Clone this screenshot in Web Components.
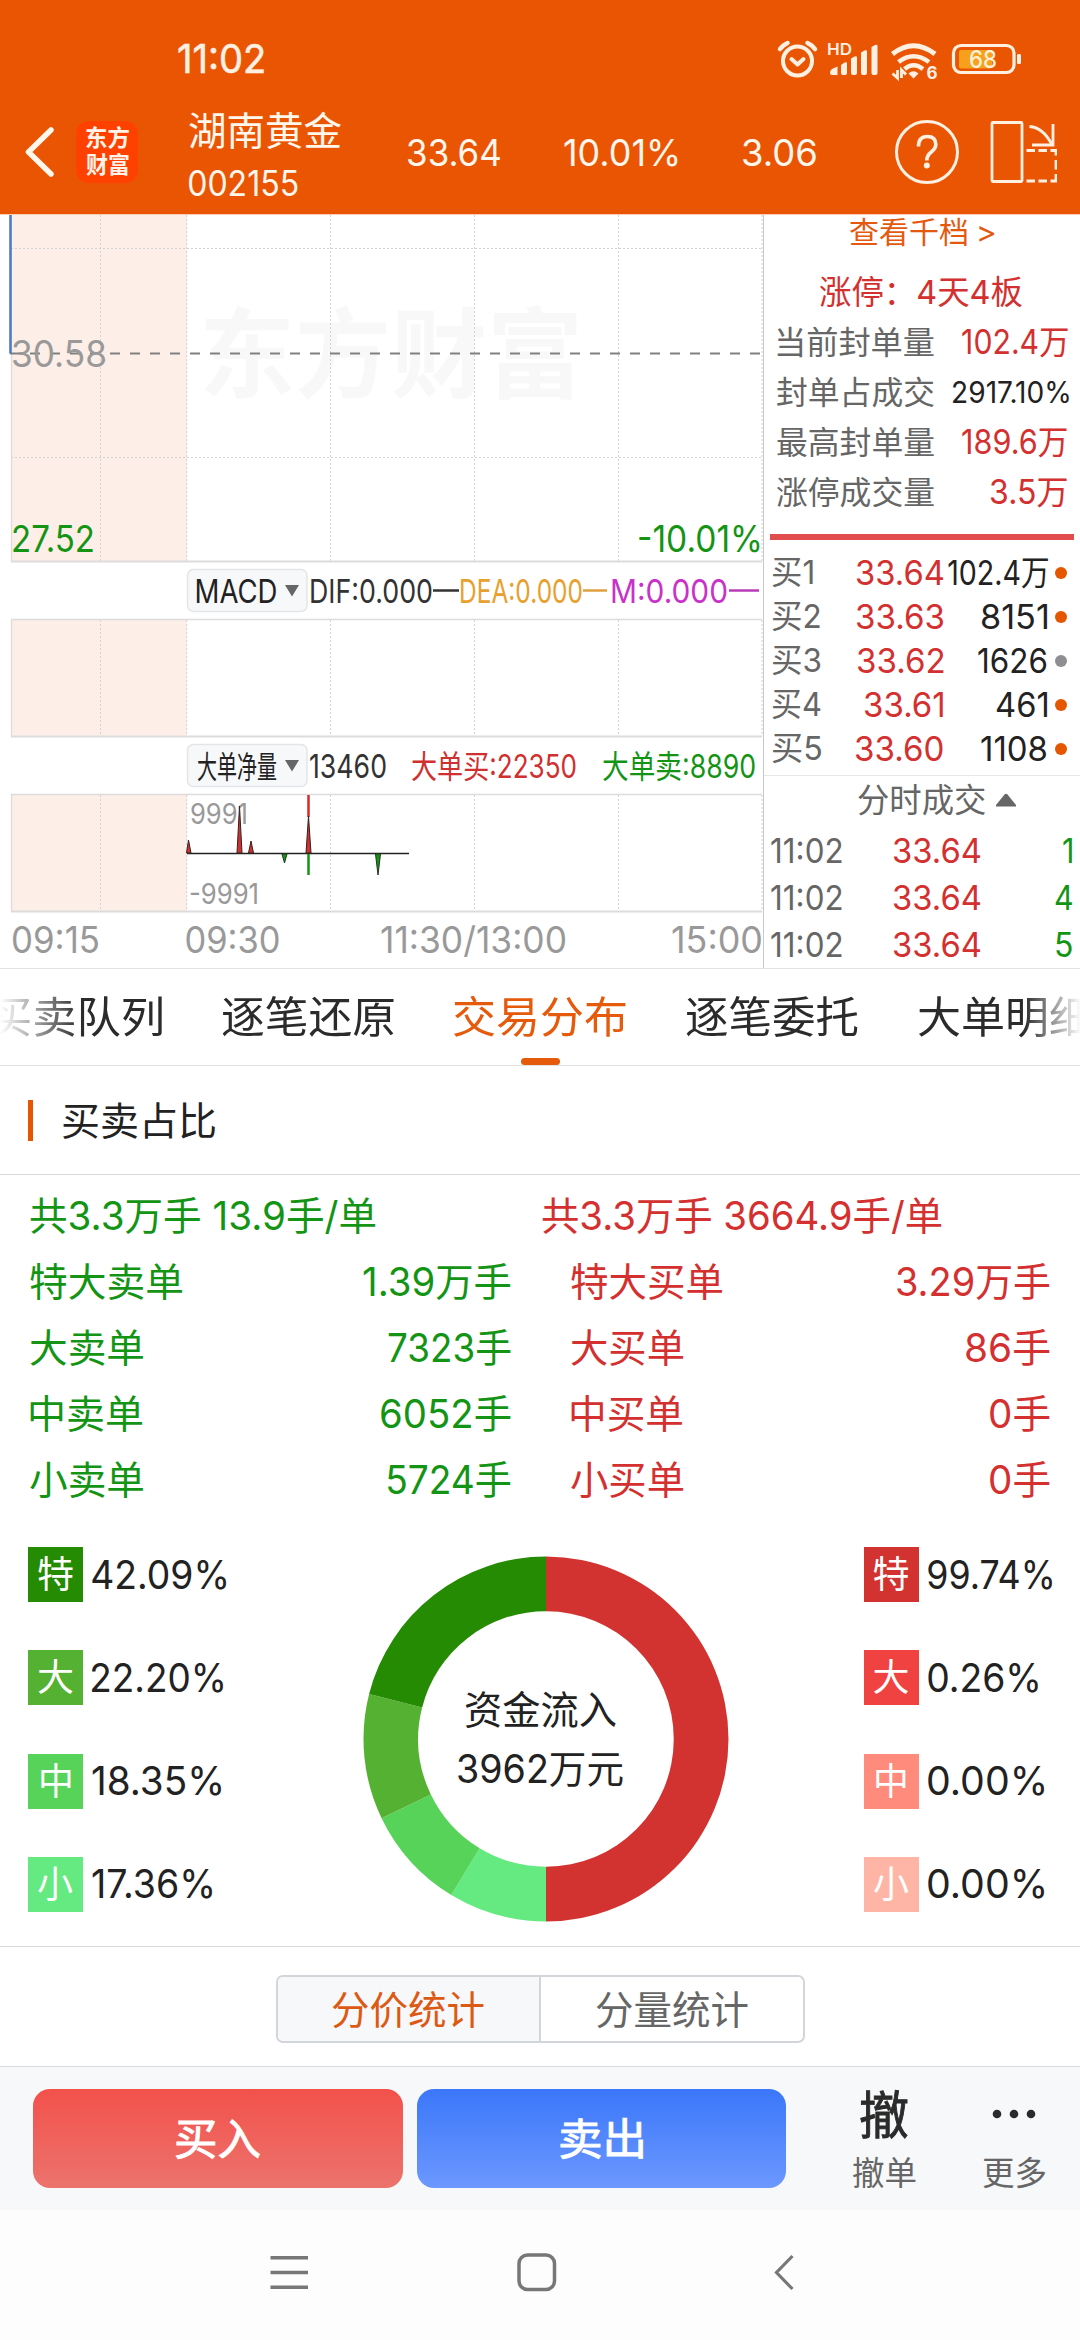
<!DOCTYPE html>
<html lang="zh-CN">
<head>
<meta charset="utf-8">
<meta name="viewport" content="width=1080">
<title>湖南黄金 002155</title>
<style>
html,body{margin:0;padding:0;background:#fff}
body{width:1080px;height:2340px;overflow:hidden;font-family:Inter,"Noto Sans CJK SC",sans-serif;color:#222}
</style>
</head>
<body>
<stock-app></stock-app>
<script>
const pen = document.createElement('canvas').getContext('2d');

/* One line of text whose ink fills exactly the width given in "w". */
class InkText extends HTMLElement {
  connectedCallback() {
    if (this.shadowRoot) return;
    const size = +this.getAttribute('size') || 32;
    const w = +this.getAttribute('w');
    const weight = this.getAttribute('weight') || 400;
    this.attachShadow({mode:'open'}).innerHTML = `<style>
      :host{display:block;flex:none;width:${w}px;height:${size}px;font-size:${size}px;line-height:${size}px;white-space:pre}
      span{display:block;width:max-content;font-weight:${weight};transform-origin:0 50%}
    </style><span><slot></slot></span>`;
    pen.font = `${weight} ${size}px Inter, "Noto Sans CJK SC", sans-serif`;
    const m = pen.measureText(this.textContent);
    const ink = m.actualBoundingBoxRight + m.actualBoundingBoxLeft;
    const s = w / ink;
    this.shadowRoot.querySelector('span').style.transform =
      `translate(${(m.actualBoundingBoxLeft * s).toFixed(2)}px,${(0.012 * size).toFixed(2)}px) scaleX(${s.toFixed(4)})`;
  }
}
const t = (text, w, size, style = '', weight = 400) =>
  `<ink-text w="${w}" size="${size}" weight="${weight}" style="${style}">${text}</ink-text>`;

function define(name, html) {
  customElements.define(name, class extends HTMLElement {
    connectedCallback() {
      if (!this.shadowRoot) this.attachShadow({mode:'open'}).innerHTML = typeof html === 'function' ? html(this) : html;
    }
  });
}
customElements.define('ink-text', InkText);

define('status-bar', `<style>
  :host{display:flex;height:82px;align-items:center;color:#fff0e2;padding-left:178px;box-sizing:border-box}
  svg{display:block;margin-left:auto;width:310px;height:82px}
  ink-text{margin-top:39px;align-self:flex-start;-webkit-text-stroke:.6px #fff0e2}
</style>
${t('11:02', 86, 40)}
<svg viewBox="770 0 310 82" fill="none" stroke="#fff0e2">
  <circle cx="797.5" cy="61" r="14.5" stroke-width="4"/>
  <path d="M791.5 59l6 5.500 6-5.500" stroke-width="4" stroke-linecap="round" stroke-linejoin="round"/>
  <path d="M780 49q3-4 7.500-6M815 49q-3-4-7.500-6" stroke-width="4.500" stroke-linecap="round"/>
  <text x="827" y="55" font-size="15.500" font-weight="600" fill="#fff0e2" stroke="none" textLength="25" lengthAdjust="spacingAndGlyphs">HD</text>
  <g fill="#fff0e2" stroke="none">
    <path d="M830 73q0-3 3-4.500l4.500-2V75H832q-2 0-2-2zM841 65l3.500-2.500q2.500-1 2.500 1V73q0 2-2 2h-2q-2 0-2-2zM851 58.500l3.500-2q2.500-1 2.500 1V73q0 2-2 2h-2q-2 0-2-2zM861 52.500l3.500-2q2.500-1 2.500 1V73q0 2-2 2h-2q-2 0-2-2zM871.500 47l3.500-2q2.500-1 2.500 1V73q0 2-2 2h-2q-2 0-2-2z"/>
  </g>
  <path d="M892.500 54Q913.500 37.500 935 54" stroke-width="5"/>
  <path d="M898.500 62Q913.500 50.500 929 62" stroke-width="4.500"/>
  <path d="M904.500 69Q913.500 61.500 923 69" stroke-width="4.500"/>
  <path d="M908.500 73.500q5-4.500 10 0l-5 5z" fill="#fff0e2" stroke="none"/>
  <path d="M897.500 70v8l-5-4.500M901.500 78v-8l4.500 4.500" stroke-width="2.800"/>
  <text x="926.500" y="79" font-size="17" font-weight="700" fill="#fff0e2" stroke="none">6</text>
  <rect x="953.500" y="45.500" width="60.500" height="27" rx="7.500" stroke-width="3.200"/>
  <rect x="959" y="50" width="33" height="18.500" rx="2" fill="#f6a01c" stroke="none"/>
  <rect x="1017" y="54" width="4" height="10" rx="1.500" fill="#fff0e2" stroke="none"/>
  <text x="969" y="68" font-size="24" font-weight="500" fill="#fff0d8" stroke="none" textLength="28" lengthAdjust="spacingAndGlyphs">68</text>
</svg>`);

define('stock-header', `<style>
  :host{display:block;height:214px;background:#ea5504;color:#fff6ec;border-bottom:1px solid #f8cdb4}
  .row{display:flex;height:132px;align-items:flex-start}
  .back{width:32px;height:54px;margin:43px 0 0 23px}
  .logo{width:62px;height:62px;margin:39px 0 0 21px;border-radius:13px;background:#ff4100;color:#fff3ea;display:flex;flex-direction:column;align-items:center;justify-content:center;gap:4px}
  .name{width:152px;margin:29px 0 0 51px}
  .q{width:66px;height:66px;margin:37px 0 0 78px}
  .r{width:68px;height:66px;margin:37px 0 0 29px}
</style>
<status-bar></status-bar>
<div class="row">
  <svg class="back" viewBox="0 0 32 54" fill="none" stroke="#fff6ec" stroke-width="5.500" stroke-linecap="round" stroke-linejoin="round"><path d="M28 5L5.500 27 28 49"/></svg>
  <div class="logo">${t('东方', 43, 23, '', 700)}${t('财富', 43, 23, '', 700)}</div>
  <div class="name">${t('湖南黄金', 152, 39)}${t('002155', 109, 35, 'margin-top:16px')}</div>
  ${t('33.64', 92, 37, 'margin:52px 0 0 67px')}
  ${t('10.01%', 114, 37, 'margin:52px 0 0 64px')}
  ${t('3.06', 73, 37, 'margin:52px 0 0 65px')}
  <svg class="q" viewBox="893.500 119 66 66" fill="none" stroke="#fff0e2"><circle cx="926.500" cy="152" r="30.500" stroke-width="3"/>
    <path d="M918 146.500q0-10 8.800-10 8.500 0 8.500 8 0 4-4.500 7.500-4.500 3.500-4.500 8.500" stroke-width="3.600"/><circle cx="926.300" cy="165.500" r="3" fill="#fff0e2" stroke="none"/></svg>
  <svg class="r" viewBox="988.500 119 68 66" fill="none" stroke="#fff0e2" stroke-width="2.800"><rect x="991.500" y="122.500" width="30" height="59" rx="1"/>
    <path d="M1029 126.500q14 1 22.500 18.500M1052.500 124v21h-21" />
    <path d="M1026 150.500h8.500M1038 150.500h8.500M1050 150.500h5.500v5M1055.500 160v9.500M1055.500 174v7h-5.500M1046.500 181h-8.500M1034.500 181h-8.500"/></svg>
</div>`);

define('minute-chart', () => {
  const xs = [100.5, 186.7, 330.5, 474.5, 618.5, 762];
  const grid = (a, b) => xs.map(x => `<path d="M${x} ${a}V${b}"/>`).join('');
  const label = (x, y, w, size, fill, s, extra = '') => `<text x="${x}" y="${y}" font-size="${size}" fill="${fill}" textLength="${w}" lengthAdjust="spacingAndGlyphs" ${extra}>${s}</text>`;
  return `<style>:host{display:block;width:763px;height:753px;flex:none}svg{display:block;overflow:visible}text{white-space:pre}</style>
<svg width="763" height="753" viewBox="0 215 763 753">
  <g fill="#fdeee7"><rect x="11" y="215" width="176" height="346"/><rect x="11" y="620" width="176" height="116"/><rect x="11" y="795" width="176" height="116"/></g>
  ${label(199, 390, 384, 98, '#f8f8f8', '东方财富', 'font-weight="700"')}
  <g stroke="#d2d2d2" stroke-width="1" stroke-dasharray="2 2" fill="none">${grid(215, 561)}${grid(620, 736)}${grid(795, 911)}<path d="M11 248.500H762M11 457.500H762"/></g>
  <g stroke="#dcdcdc" stroke-width="2" fill="none"><path d="M11 561.500H762M11 736.500H762M11 911.500H762"/><path d="M11 619.500H762M11 794.500H762M11.500 353V562M11.500 620V737M11.500 795V912" stroke-width="1.300"/></g>
  <path d="M10 353.500H762" stroke="#808080" stroke-width="2" stroke-dasharray="10 10"/>
  <path d="M10.500 215V353.500" stroke="#4a7ebd" stroke-width="2.600"/>
  ${label(11, 367, 96, 36.5, '#999', '30.58')}
  ${label(11, 552, 84, 36.5, '#149414', '27.52')}
  ${label(637, 552, 126, 36.5, '#149414', '-10.01%')}
  <g fill="#f7f8fa" stroke="#e3e5e8" stroke-width="1.500"><rect x="187.500" y="569.500" width="119.500" height="42" rx="6"/><rect x="187.500" y="744.500" width="119.500" height="42" rx="6"/></g>
  <path d="M285 585h14l-7 11.500zM285 760h14l-7 11.500z" fill="#666"/>
  ${label(194.5, 603, 83, 33, '#222', 'MACD')}
  ${label(309, 603, 124, 33, '#333', 'DIF:0.000')}
  ${label(459, 603, 124, 33, '#e8a02e', 'DEA:0.000')}
  ${label(610, 603, 118, 33, '#c832c8', 'M:0.000')}
  <path d="M433 590.500h26" stroke="#333" stroke-width="2.500"/><path d="M583 590.500h24" stroke="#e0a040" stroke-width="2.500"/><path d="M729 590.500h30" stroke="#b83cb8" stroke-width="2.500"/>
  ${label(197, 777.5, 80, 31, '#222', '大单净量')}
  ${label(309, 778, 78, 33, '#333', '13460')}
  ${label(411, 778, 166, 32, '#d03030', '大单买:22350')}
  ${label(602, 778, 154, 32, '#149414', '大单卖:8890')}
  ${label(190, 824, 58, 28, '#999', '9991')}
  ${label(189, 904, 70, 28, '#999', '-9991')}
  <path d="M187 853.500H409" stroke="#222" stroke-width="1.500"/>
  <g stroke="#332222" stroke-width="1" fill="#d03030"><path d="M186.500 853l2-13 2.500 13zM237 853l2.500-47 2.500 47zM248.500 853l2.500-12 2.500 12z"/></g>
  <path d="M308.500 795V817" stroke="#d82828" stroke-width="2.500"/>
  <path d="M306 853l2.500-37 2.500 37z" stroke="#332222" fill="#d03030"/>
  <path d="M308.500 854v21" stroke="#149414" stroke-width="2.500"/>
  <g stroke="#1f3a20" fill="#149414"><path d="M282 854l2.500 9 2.500-9zM375.500 854l2.500 21 2.500-21z"/></g>
  ${label(11, 953, 89, 36.5, '#999', '09:15')}
  ${label(184.5, 953, 96, 36.5, '#999', '09:30')}
  ${label(380, 953, 187, 36.5, '#999', '11:30/13:00')}
  ${label(671, 953, 92, 36.5, '#999', '15:00')}
</svg>`;
});

define('stat-row', el => `<style>:host{display:flex;height:50px;align-items:center;justify-content:space-between;padding:0 ${el.getAttribute('r')}px 0 11px;color:#666}</style>
${t(el.getAttribute('k'), 157, 32)}${t(el.getAttribute('v'), el.getAttribute('w'), el.getAttribute('s') || 33.5, `color:${el.getAttribute('c') || '#d3302f'}`)}`);

define('bid-row', el => {
  const [n, nw, p, pl, pw, v, vl, vw, c] = el.getAttribute('data').split('|');
  return `<style>:host{display:flex;height:44px;align-items:center;color:#666}
  i{width:12px;height:12px;border-radius:50%;background:${c};margin-left:${1055 - vl - vw}px}</style>
  ${t(n, nw, 32.5, 'margin-left:6px')}${t(p, pw, 34, `color:#d3302f;margin-left:${pl - 772 - nw}px`)}${t(v, vw, 34, `color:#222;margin-left:${vl - pl - pw}px`)}<i></i>`;
});

define('tick-row', el => `<style>:host{display:flex;height:47px;align-items:center;color:#666}</style>
${t('11:02', 71, 34, 'margin-left:5px')}${t('33.64', 86, 34, 'color:#d3302f;margin-left:52px')}${t(el.getAttribute('v'), el.getAttribute('w'), 34, 'color:#149414;margin:0 8px 0 auto')}`);

define('quote-panel', `<style>
  :host{display:block;flex:1;border-left:1px solid #c8c8c8;height:753px;box-sizing:border-box}
  .in{padding-left:2px}
  .link{display:flex;height:33px;align-items:center;color:#e4590f;margin-left:84px;gap:12px}
  .title{display:flex;height:52px;padding-top:18px;align-items:center;margin-left:54px;color:#d3302f}
  .bar{height:6px;margin:16px 6px 11px 4px;background:#e14c4c}
  .head{display:flex;height:52px;margin-top:4px;border-top:1.500px solid #e6e6e6;align-items:center;padding-left:94px;gap:10px;color:#666;box-sizing:border-box}
</style>
<div class="in">
<div class="link">${t('查看千档', 117, 30)}${t('&gt;', 16, 30)}</div>
<div class="title">${t('涨停：4天4板', 202, 33)}</div>
<stat-row k="当前封单量" v="102.4万" w="106" r="12"></stat-row>
<stat-row k="封单占成交" v="2917.10%" w="116" r="11" s="29.5" c="#222"></stat-row>
<stat-row k="最高封单量" v="189.6万" w="105" r="13"></stat-row>
<stat-row k="涨停成交量" v="3.5万" w="76" r="13"></stat-row>
<div class="bar"></div>
<bid-row data="买1|41|33.64|857|86|102.4万|948|100|#e65500"></bid-row>
<bid-row data="买2|48|33.63|857|86|8151|982|65|#e65500"></bid-row>
<bid-row data="买3|49|33.62|858|86|1626|978|69|#8e8e93"></bid-row>
<bid-row data="买4|49|33.61|865|78|461|996|51|#e65500"></bid-row>
<bid-row data="买5|49|33.60|856|87|1108|981|65|#e65500"></bid-row>
</div>
<div class="head">${t('分时成交', 128, 32.5)}<svg width="20" height="14" style="margin-top:-4px"><path d="M8.500 1.500q1.500-1.500 3 0L20 12v1.500H0V12z" fill="#666"/></svg></div>
<div class="in"><tick-row v="1" w="9"></tick-row><tick-row v="4" w="17"></tick-row><tick-row v="5" w="16"></tick-row></div>`);

define('tab-strip', `<style>
  :host{display:block;height:98px;box-sizing:border-box;border-top:1.500px solid #e2e2e2;border-bottom:1.500px solid #e2e2e2;overflow:hidden}
  .tabs{display:flex;gap:60px;height:96px;margin-left:-10px;width:1120px;align-items:flex-start;color:#2b2b2b;
    -webkit-mask:linear-gradient(90deg,transparent 10px,#000 90px,#000 1034px,transparent 1091px)}
  .tab{display:flex;flex-direction:column;align-items:center;padding-top:26px;flex:none}
  .on{color:#e65a0c}
  .on::after{content:"";width:39px;height:7px;border-radius:3.500px;background:#e65a0c;margin-top:20px}
</style>
<div class="tabs">
  <div class="tab">${t('买卖队列', 172, 43)}</div><div class="tab">${t('逐笔还原', 172, 43)}</div>
  <div class="tab on">${t('交易分布', 172, 43)}</div><div class="tab">${t('逐笔委托', 172, 43)}</div>
  <div class="tab">${t('大单明细', 172, 43)}</div>
</div>`);

define('section-title', `<style>:host{display:flex;align-items:center;height:109px;box-sizing:border-box;border-bottom:1.500px solid #d8d8d8;padding-left:28px;gap:30px;color:#222}
  i{width:5px;height:41px;background:#e65500}</style><i></i>${t('买卖占比', 152, 39)}`);

define('order-row', el => `<style>:host{display:flex;height:66px;align-items:center;justify-content:space-between}</style>
${t(el.getAttribute('k'), el.getAttribute('kw'), 39)}${t(el.getAttribute('v'), el.getAttribute('w'), 39)}`);

define('order-summary', `<style>
  :host{display:flex;height:338px;box-sizing:border-box}
  .s{color:#149414;width:481px;margin-left:30px}.b{color:#d3302f;width:508px;margin-left:31px}
  .sum{display:flex;height:66px;align-items:center;padding-top:7px}
  .b .rows{margin-left:29px;width:479px}
</style>
<div class="s"><div class="sum">${t('共3.3万手 13.9手/单', 346, 39)}</div><div class="rows">
  <order-row k="特大卖单" kw="152" v="1.39万手" w="148"></order-row><order-row k="大卖单" kw="113" v="7323手" w="123"></order-row>
  <order-row k="中卖单" kw="112" v="6052手" w="130"></order-row><order-row k="小卖单" kw="113" v="5724手" w="123"></order-row></div></div>
<div class="b"><div class="sum">${t('共3.3万手 3664.9手/单', 400, 39)}</div><div class="rows">
  <order-row k="特大买单" kw="151" v="3.29万手" w="153"></order-row><order-row k="大买单" kw="112" v="86手" w="84"></order-row>
  <order-row k="中买单" kw="111" v="0手" w="60"></order-row><order-row k="小买单" kw="112" v="0手" w="60"></order-row></div></div>`);

define('legend-item', el => `<style>:host{display:flex;height:55px;align-items:center;gap:9px;color:#222}
  b{display:flex;width:55px;height:55px;background:${el.getAttribute('c')};align-items:center;justify-content:center;color:#fff}</style>
  <b>${t(el.getAttribute('k'), el.getAttribute('kw') || 35, 37)}</b>${t(el.getAttribute('v'), el.getAttribute('w'), 40)}`);

define('fund-donut', () => {
  const cx = 183, R = 182.5, r = 127.8;
  const pt = (a, q) => { const d = a * Math.PI / 180; return `${(cx + q * Math.sin(d)).toFixed(2)} ${(cx - q * Math.cos(d)).toFixed(2)}`; };
  const seg = (a, b, c) => `<path d="M${pt(a, R)}A${R} ${R} 0 0 1 ${pt(b, R)}L${pt(b, r)}A${r} ${r} 0 0 0 ${pt(a, r)}Z" fill="${c}"/>`;
  return `<style>:host{display:grid;width:366px;height:366px;margin-top:9px}svg,.c{grid-area:1/1}
    .c{display:flex;flex-direction:column;align-items:center;padding-top:134px;gap:20px;color:#222;z-index:1;margin-right:10px}</style>
  <svg width="366" height="366">${seg(0, 180, '#d33330')}${seg(180, 211.25, '#64ea80')}${seg(211.25, 244.28, '#58d35a')}${seg(244.28, 284.24, '#55b131')}${seg(284.24, 360, '#258b03')}</svg>
  <div class="c">${t('资金流入', 151, 39)}${t('3962万元', 165, 39)}</div>`;
});

define('fund-flow', `<style>
  :host{display:flex;height:434px;box-sizing:border-box;padding-top:34px;border-bottom:1.500px solid #d8d8d8;align-items:flex-start}
  .l{display:flex;flex-direction:column;gap:48.300px}
  .a{margin-left:28px;width:334.500px}.z{margin-left:135px}
</style>
<div class="l a"><legend-item c="#258b03" k="特" v="42.09%" w="134"></legend-item><legend-item c="#55b131" k="大" v="22.20%" w="131"></legend-item>
  <legend-item c="#58d35a" k="中" kw="30" v="18.35%" w="129"></legend-item><legend-item c="#64ea80" k="小" v="17.36%" w="120"></legend-item></div>
<fund-donut></fund-donut>
<div class="l z"><legend-item c="#d33330" k="特" v="99.74%" w="124"></legend-item><legend-item c="#f04341" k="大" v="0.26%" w="110"></legend-item>
  <legend-item c="#ff8b7c" k="中" kw="30" v="0.00%" w="116"></legend-item><legend-item c="#ffb5a6" k="小" v="0.00%" w="116"></legend-item></div>`);

define('stat-switch', `<style>
  :host{display:flex;height:119px;align-items:flex-start;justify-content:center;padding-top:28px;box-sizing:border-box}
  .g{display:flex;width:529px;height:68px;box-sizing:border-box;border:2px solid #d2d5d9;border-radius:7px;overflow:hidden}
  .g div{flex:1;display:flex;align-items:center;justify-content:center;color:#666}
  .g .on{background:#f7f8fa;color:#dd5a14;border-right:2px solid #d2d5d9}
</style><div class="g"><div class="on">${t('分价统计', 152, 39)}</div><div>${t('分量统计', 152, 39)}</div></div>`);

define('trade-bar', `<style>
  :host{display:flex;height:144px;background:#f7f8fa;border-top:1.500px solid #d6d9dd;box-sizing:border-box;padding:22px 0 0 33px;align-items:flex-start}
  .btn{width:369.500px;height:99px;border-radius:17px;display:flex;align-items:center;justify-content:center;color:#fff;-webkit-text-stroke:.9px #fff}
  .buy{background:linear-gradient(#f3514b,#ec736d);margin-right:14px}.sell{background:linear-gradient(#3b77f9,#6c98ff)}
  .btn ink-text{margin-top:-1px}
  .col{display:flex;flex-direction:column;align-items:center;width:64px;color:#666}
</style>
<div class="btn buy">${t('买入', 84, 43)}</div><div class="btn sell">${t('卖出', 83, 43)}</div>
<div class="col" style="margin-left:66px">${t('撤', 48, 51, 'color:#2b2b2b;-webkit-text-stroke:.9px #2b2b2b')}${t('撤单', 63, 33, 'margin-top:17px')}</div>
<div class="col" style="margin-left:66px"><svg width="44" height="51"><g fill="#2b2b2b"><circle cx="5" cy="25" r="4.300"/><circle cx="22" cy="25" r="4.300"/><circle cx="39" cy="25" r="4.300"/></g></svg>${t('更多', 63, 33, 'margin-top:17px')}</div>`);

define('nav-bar', `<style>:host{display:block;height:130px;background:#fdfdfd}svg{display:block}</style>
<svg width="1080" height="130" viewBox="0 2210 1080 130" fill="none" stroke="#777" stroke-width="3.500">
<path d="M270.500 2257.700h37.500M270.500 2272.500h37.500M270.500 2287.300h37.500"/><rect x="519" y="2255" width="35.500" height="34.500" rx="8.500"/><path d="M792.500 2256L776.500 2272.500l16 16.500" stroke-width="3.200"/></svg>`);

define('stock-app', `<style>:host{display:block;width:1080px;height:2340px;overflow:hidden;background:#fff}.m{display:flex}</style>
<stock-header></stock-header>
<div class="m"><minute-chart></minute-chart><quote-panel></quote-panel></div>
<tab-strip></tab-strip><section-title></section-title><order-summary></order-summary>
<fund-flow></fund-flow><stat-switch></stat-switch><trade-bar></trade-bar><nav-bar></nav-bar>`);
</script>
</body>
</html>
